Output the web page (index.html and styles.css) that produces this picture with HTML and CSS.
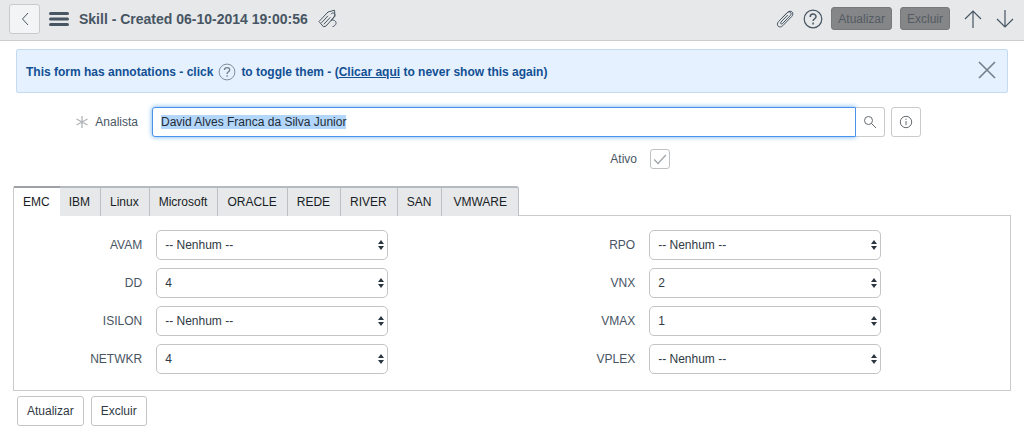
FILE: index.html
```
<!DOCTYPE html>
<html lang="pt-BR">
<head>
<meta charset="utf-8">
<title>Skill</title>
<link rel="stylesheet" href="styles.css">
</head>
<body>
<svg class="defs" aria-hidden="true">
  <symbol id="help" viewBox="0 0 20 20"><circle cx="10" cy="10" r="8.800"/><path d="M7.200 7.900c0-3.800 5.800-3.700 5.800-.2 0 2-2.900 2.200-2.900 4.400M10.100 13.600v1.800" stroke-width="1.500"/></symbol>
</svg>
<header class="bar">
  <button class="back" type="button" aria-label="Voltar"><svg width="8" height="14" viewBox="0 0 8 14"><path d="M7 1 1.500 7 7 13"/></svg></button>
  <button class="icon menu" type="button" aria-label="Menu"><svg width="20" height="16" viewBox="0 0 20 16"><path d="M1.500 2.500h17M1.500 8h17M1.500 13.500h17"/></svg></button>
  <h1 class="title">Skill - Created 06-10-2014 19:00:56</h1>
  <button class="icon tags" type="button" aria-label="Tags"><svg width="20" height="20" viewBox="0 0 20 20"><path d="M1 12.500 10 3l6.500-1.800.5 6L8 17l-2.500.8zM3.500 13.800l6.500-7M5.800 15.300l6.500-7M13 5.200c1.500-2.500 4.500-1 3.500 1.500-.5 1.500-2 3-3.500 4.800 2-1.200 5.500.3 5 3-.3 1.500-1.800 2.800-3.500 3.200"/></svg></button>
  <div class="tools">
    <button class="icon clip" type="button" aria-label="Anexos"><svg width="20" height="20" viewBox="0 0 20 20"><path d="M12.800 6 6 13c-1.200 1.300.3 2.800 1.600 1.500l7.600-7.900c2.400-2.600-.7-5.300-3.200-2.800L3.600 12.500c-3.300 3.700.8 7.500 4.200 4.200l8.900-9.200c3.200-3.500-.8-7.300-4.200-4L6.800 9.300"/></svg></button>
    <button class="icon" type="button" aria-label="Ajuda"><svg width="20" height="20"><use href="#help"/></svg></button>
    <button class="action" type="button">Atualizar</button>
    <button class="action" type="button">Excluir</button>
    <button class="icon arrow" type="button" aria-label="Anterior"><svg width="18" height="20" viewBox="0 0 18 20"><path d="M9 19V2M1 10l8-8 8 8"/></svg></button>
    <button class="icon arrow" type="button" aria-label="Próximo"><svg width="18" height="20" viewBox="0 0 18 20"><path d="M9 1v17M1 10l8 8 8-8"/></svg></button>
  </div>
</header>
<main>
  <section class="notice">
    <p class="notice-text"><span>This form has annotations - click</span><svg class="inline-help" width="18" height="18" viewBox="0 0 20 20"><use href="#help"/></svg><span>to toggle them - (<a href="#">Clicar aqui</a> to never show this again)</span></p>
    <button class="icon close" type="button" aria-label="Fechar"><svg width="18" height="18" viewBox="0 0 18 18"><path d="m1 1 16 16M17 1 1 17"/></svg></button>
  </section>
  <form class="form">
    <div class="reference">
      <label class="label" for="analista"><svg class="required" width="12" height="12" viewBox="0 0 12 12"><path d="M6 0v12M.5 3l11 6M.5 9l11-6"/></svg>Analista</label>
      <input class="text" id="analista" type="text" value="David Alves Franca da Silva Junior" autofocus>
      <button class="square lookup" type="button" aria-label="Pesquisar"><svg width="14" height="14" viewBox="0 0 14 14"><circle cx="5.500" cy="5.500" r="4"/><path d="m8.500 8.500 4.500 4.500"/></svg></button>
      <button class="square" type="button" aria-label="Informações"><svg width="14" height="14" viewBox="0 0 14 14"><circle cx="7" cy="7" r="5.700"/><path d="M7 6v4.200M7 3.700v1.200"/></svg></button>
    </div>
    <div class="active-row">
      <label class="label" for="ativo">Ativo</label>
      <span class="check"><input id="ativo" type="checkbox" checked><svg width="14" height="12" viewBox="0 0 12 10"><path d="m1 5.500 3.300 3.300L11 1.500"/></svg></span>
    </div>
    <div class="tabs" role="tablist">
      <button class="tab selected" type="button" role="tab" aria-selected="true">EMC</button>
      <button class="tab" type="button" role="tab">IBM</button>
      <button class="tab" type="button" role="tab">Linux</button>
      <button class="tab" type="button" role="tab">Microsoft</button>
      <button class="tab" type="button" role="tab">ORACLE</button>
      <button class="tab" type="button" role="tab">REDE</button>
      <button class="tab" type="button" role="tab">RIVER</button>
      <button class="tab" type="button" role="tab">SAN</button>
      <button class="tab" type="button" role="tab">VMWARE</button>
    </div>
    <div class="panel" role="tabpanel">
      <div class="column">
        <div class="field"><label class="label" for="avam">AVAM</label><span class="select"><select id="avam"><option>-- Nenhum --</option></select><svg width="6" height="10" viewBox="0 0 6 10"><path d="M0 4 3 0l3 4zM0 6h6l-3 4z"/></svg></span></div>
        <div class="field"><label class="label" for="dd">DD</label><span class="select"><select id="dd"><option>4</option></select><svg width="6" height="10" viewBox="0 0 6 10"><path d="M0 4 3 0l3 4zM0 6h6l-3 4z"/></svg></span></div>
        <div class="field"><label class="label" for="isilon">ISILON</label><span class="select"><select id="isilon"><option>-- Nenhum --</option></select><svg width="6" height="10" viewBox="0 0 6 10"><path d="M0 4 3 0l3 4zM0 6h6l-3 4z"/></svg></span></div>
        <div class="field"><label class="label" for="netwkr">NETWKR</label><span class="select"><select id="netwkr"><option>4</option></select><svg width="6" height="10" viewBox="0 0 6 10"><path d="M0 4 3 0l3 4zM0 6h6l-3 4z"/></svg></span></div>
      </div>
      <div class="column">
        <div class="field"><label class="label" for="rpo">RPO</label><span class="select"><select id="rpo"><option>-- Nenhum --</option></select><svg width="6" height="10" viewBox="0 0 6 10"><path d="M0 4 3 0l3 4zM0 6h6l-3 4z"/></svg></span></div>
        <div class="field"><label class="label" for="vnx">VNX</label><span class="select"><select id="vnx"><option>2</option></select><svg width="6" height="10" viewBox="0 0 6 10"><path d="M0 4 3 0l3 4zM0 6h6l-3 4z"/></svg></span></div>
        <div class="field"><label class="label" for="vmax">VMAX</label><span class="select"><select id="vmax"><option>1</option></select><svg width="6" height="10" viewBox="0 0 6 10"><path d="M0 4 3 0l3 4zM0 6h6l-3 4z"/></svg></span></div>
        <div class="field"><label class="label" for="vplex">VPLEX</label><span class="select"><select id="vplex"><option>-- Nenhum --</option></select><svg width="6" height="10" viewBox="0 0 6 10"><path d="M0 4 3 0l3 4zM0 6h6l-3 4z"/></svg></span></div>
      </div>
    </div>
    <div class="footer">
      <button class="submit" type="button">Atualizar</button>
      <button class="submit" type="button">Excluir</button>
    </div>
  </form>
</main>
<script src="form.js"></script>
</body>
</html>
```
FILE: form.js
```
const analista = document.getElementById("analista");
analista.focus();
analista.select();
```
FILE: styles.css
```
* { box-sizing: border-box; }
body { margin: 0; background: #fff; color: #485563; font: 12px/16px "Liberation Sans", Arial, sans-serif; }
button, input, select { font: inherit; color: inherit; margin: 0; }
button { cursor: pointer; }
svg { display: block; fill: none; stroke: currentColor; }
.defs { position: absolute; width: 0; height: 0; }

.bar { display: flex; align-items: center; height: 41px; padding: 0 10px 3px 9px; background: #e6e8ea; border-bottom: 1px solid #cbcdcf; }
.back { display: grid; place-items: center; width: 31px; height: 30px; padding: 0; background: #f3f4f5; border: 1px solid #c8cacc; border-radius: 3px; }
.icon { display: grid; place-items: center; padding: 0; border: 0; background: none; }
.menu { margin-left: 9px; stroke-width: 3; }
.menu svg { stroke-linecap: round; }
.title { margin: 0 10px; font-size: 14px; line-height: 18px; font-weight: bold; }
.tools { display: flex; align-items: center; gap: 8px; margin-left: auto; }
.tools svg { stroke-width: 1.2; }
.tools .clip svg { stroke-width: 1; }
.action { height: 23px; padding: 0 6px; background: #858687; color: #545b64; border: 1px solid #77797b; border-radius: 3px; }
.arrow { margin-left: 6px; }

.notice { display: flex; align-items: center; justify-content: space-between; min-height: 44px; margin: 8px 16px 0; padding: 0 11px 2px 9px; background: #e5f1fe; border: 1px solid #c4daf0; border-radius: 2px; }
.notice-text { display: flex; align-items: center; gap: 5px; margin: 3px 0 0; color: #124f93; font-weight: bold; }
.notice-text a { color: inherit; }
.inline-help { flex: none; color: #75818c; }
.close { color: #75818c; }
.close svg { stroke-width: 1.7; }

.form { padding: 14px 13px 0; }
.label { display: flex; align-items: center; justify-content: flex-end; gap: 7px; }
.reference { display: grid; grid-template-columns: 125px 1fr 29px 36px; align-items: center; margin-right: 90px; }
.required { color: #b0b4b8; stroke-width: 1.3; }
.text { height: 30px; margin-left: 14px; padding: 0 8px; background: #fff; color: #222b35; border: 1px solid #4b92ee; border-radius: 3px 0 0 3px; outline: 0; box-shadow: 0 0 5px #66afe9; }
.text::selection { background: #b3d6fb; color: #222b35; }
.square { display: grid; place-items: center; width: 30px; height: 30px; padding: 0; background: #fff; color: #666b70; border: 1px solid #c8cacc; border-radius: 3px; }
.square:last-child { margin-left: 6px; }
.lookup { width: 29px; border-left: 0; border-radius: 0 3px 3px 0; }
.active-row { display: grid; grid-template-columns: 1fr 374px; align-items: center; gap: 13px; margin: 12px -13px 0 0; }
.check { display: grid; place-items: center; width: 20px; height: 20px; }
.check > * { grid-area: 1 / 1; }
.check input { appearance: none; width: 20px; height: 20px; border: 1px solid #bfc2c5; border-radius: 3px; background: #fff; }
.check svg { z-index: 1; color: #a3a8ac; stroke-width: 1.2; pointer-events: none; }

.tabs { display: flex; margin-top: 17px; }
.tab { height: 30px; padding: 0 10px 0 9px; background: #e7e8ea; color: #181e25; border: 0; border-top: 2px solid #b4bac0; border-right: 1px solid #bcc0c4; }
.tab:last-child { border-top-right-radius: 3px; padding: 0 11px; }
.selected { z-index: 1; margin-bottom: -1px; height: 31px; padding-bottom: 1px; background: #fff; border-top-color: #9da1a5; border-left: 1px solid #c8cacc; border-right: 0; border-top-left-radius: 2px; }
.panel { display: grid; grid-template-columns: 1fr 1fr; margin-top: -1px; padding: 14px 10px 16px 0; border: 1px solid #c8cacc; }
.column { display: grid; gap: 8px; }
.field { display: grid; grid-template-columns: 26% 47%; align-items: center; gap: 14px; }
.select { display: grid; align-items: center; }
.select > * { grid-area: 1 / 1; }
.select select { appearance: none; width: 100%; height: 30px; padding: 0 20px 0 8px; background: #fff; color: #303a45; border: 1px solid #c2c5c8; border-radius: 5px; }
.select svg { z-index: 1; justify-self: end; margin-right: 4px; fill: #2c3640; stroke: none; pointer-events: none; }
.footer { display: flex; gap: 7px; padding: 5px 4px; }
.submit { height: 30px; padding: 0 9px; background: #fff; color: #303a45; border: 1px solid #c2c5c8; border-radius: 3px; }
```
